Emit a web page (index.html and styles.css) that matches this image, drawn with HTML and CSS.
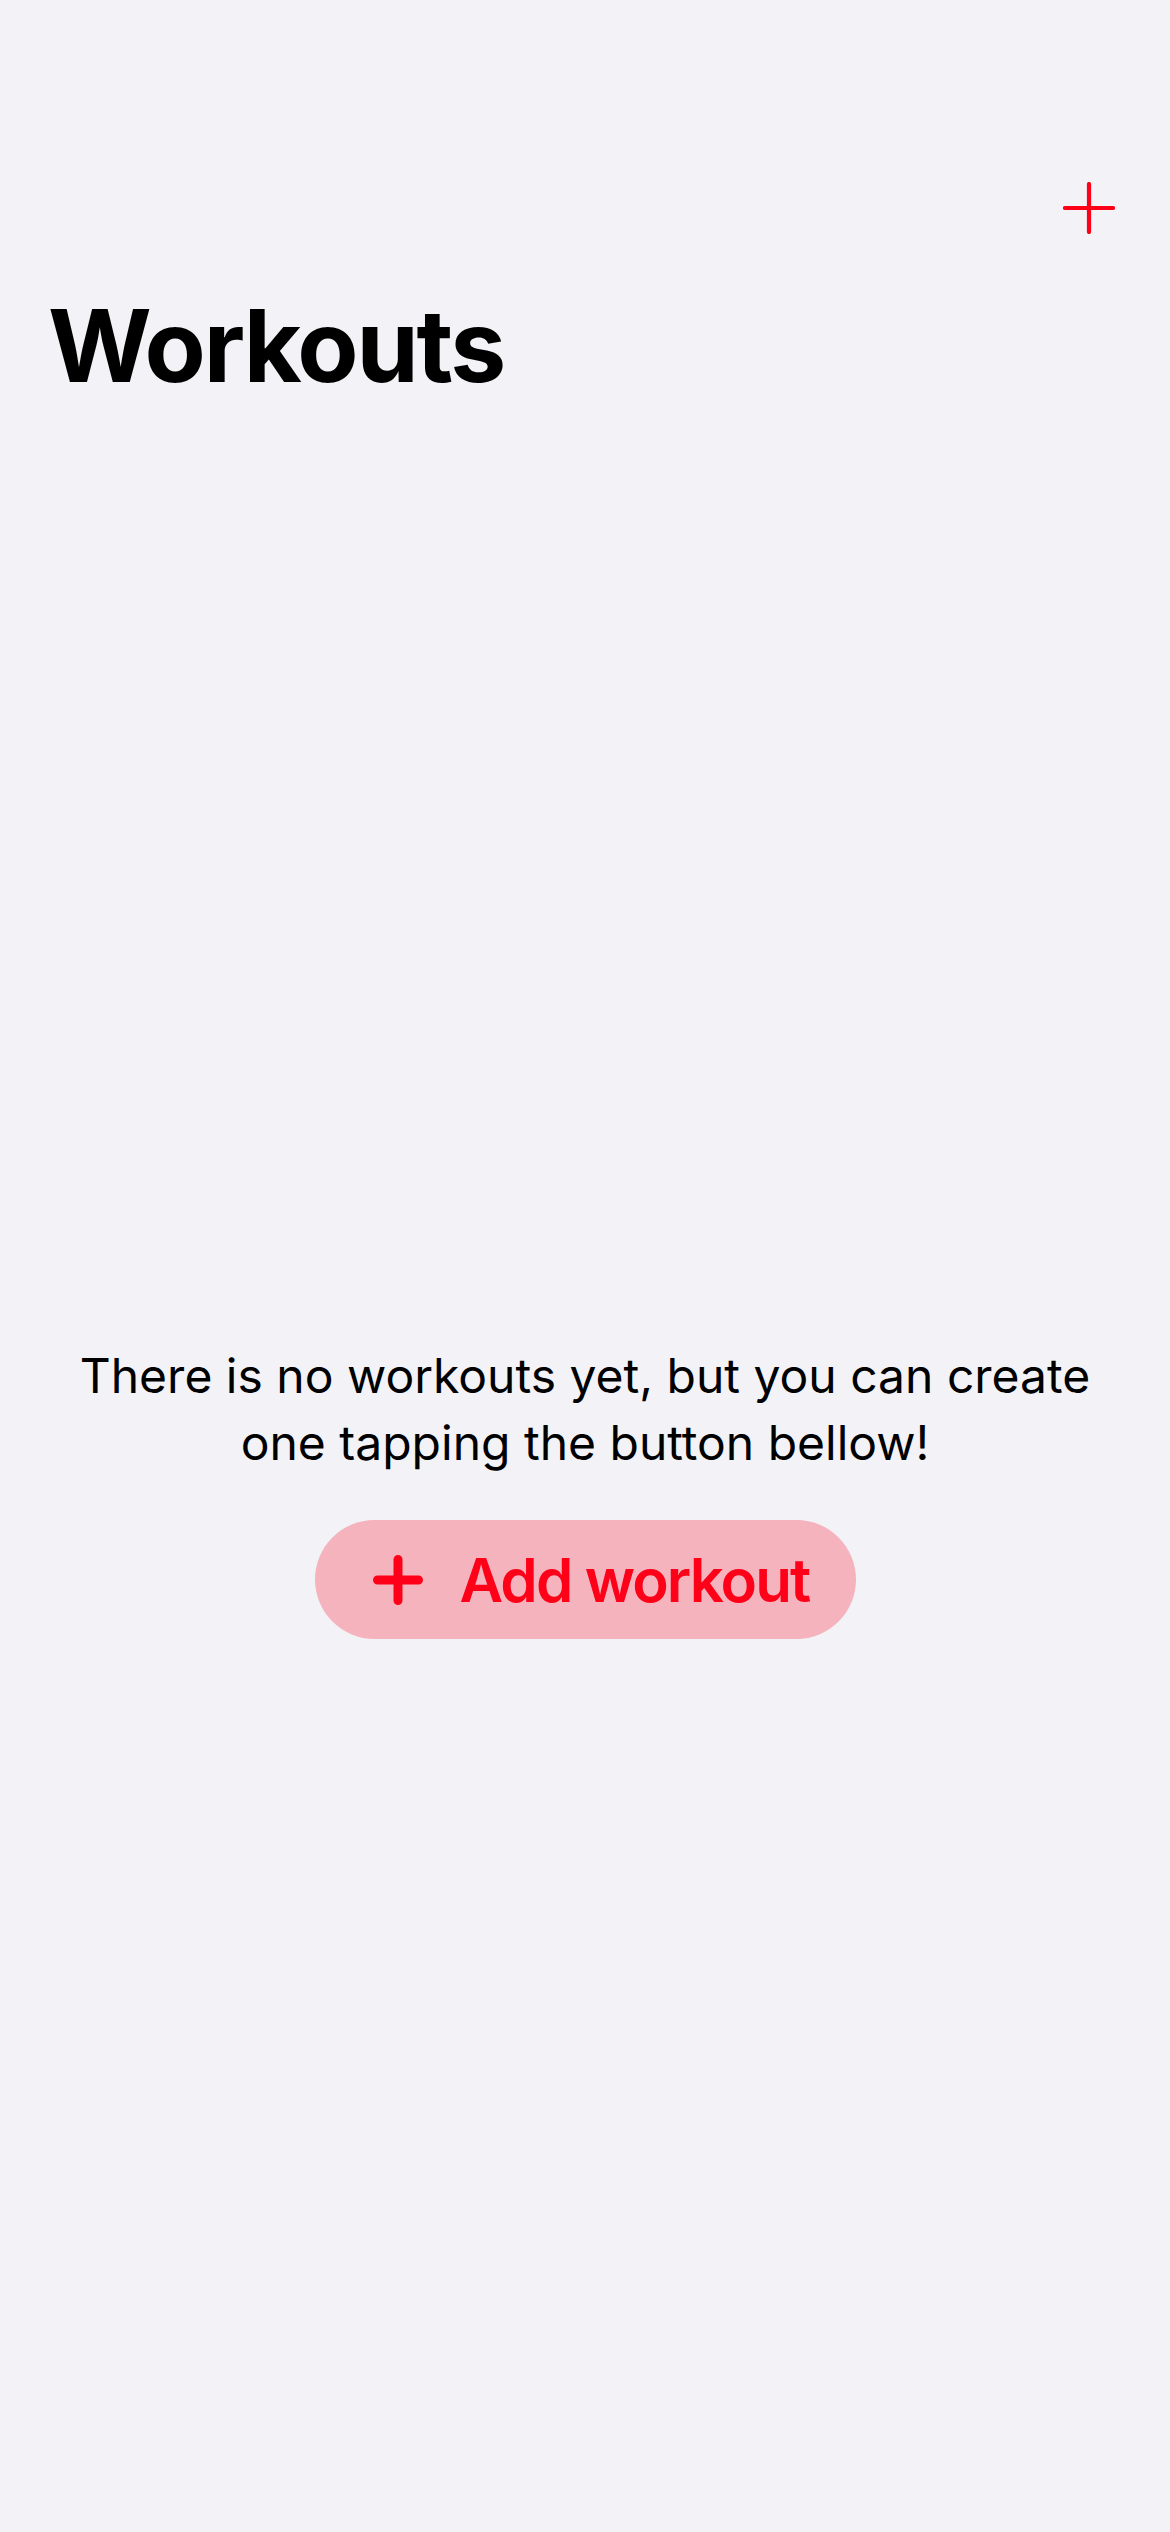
FILE: index.html
```html
<!DOCTYPE html>
<html>
<head>
<meta charset="utf-8">
<link rel="stylesheet" href="styles.css">
</head>
<body>
<div class="screen">
  <header class="navbar">
    <div class="nav-actions">
      <button class="icon-btn" aria-label="Add">
        <svg width="52" height="52" viewBox="0 0 52 52"><path d="M26 2v48M2 26h48" stroke="#FF0019" stroke-width="4.2" stroke-linecap="round" fill="none"/></svg>
      </button>
    </div>
    <h1 class="title">Workouts</h1>
  </header>
  <main class="empty">
    <p class="empty-text">There is no workouts yet, but you can create one tapping the button bellow!</p>
    <button class="add-btn">
      <svg width="50" height="50" viewBox="0 0 50 50"><path d="M25 4.5v41M4.5 25h41" stroke="#FF0019" stroke-width="9" stroke-linecap="round" fill="none"/></svg>
      <span>Add workout</span>
    </button>
  </main>
</div>
</body>
</html>
```
FILE: styles.css
```css
html, body {
  margin: 0;
  padding: 0;
  background: #F2F2F7;
}
.screen {
  width: 1170px;
  height: 2532px;
  font-family: Inter, "Noto Sans", sans-serif;
  color: #000;
  display: flex;
  flex-direction: column;
}
.navbar {
  padding: 182px 55px 0 48px;
}
.nav-actions {
  display: flex;
  justify-content: flex-end;
  height: 52px;
}
.icon-btn {
  border: 0;
  padding: 0;
  background: none;
  width: 52px;
  height: 52px;
  display: block;
}
.title {
  margin: 52px 0 0 0;
  font-size: 100px;
  line-height: 120px;
  font-weight: 700;
  letter-spacing: -2.2px;
}
.empty {
  display: flex;
  flex-direction: column;
  align-items: center;
  padding-top: 936px;
}
.empty-text {
  margin: 0;
  width: 1040px;
  text-align: center;
  font-size: 48px;
  line-height: 67px;
  font-weight: 400;
}
.add-btn {
  margin-top: 44px;
  height: 119px;
  width: 541px;
  border: 0;
  border-radius: 60px;
  background: #F5B3BD;
  color: #FF0019;
  font-family: Inter, "Noto Sans", sans-serif;
  font-size: 60px;
  font-weight: 600;
  letter-spacing: -1.9px;
  display: flex;
  align-items: center;
  padding: 0 0 0 58px;
  gap: 37px;
  box-sizing: border-box;
}
.add-btn svg { flex: none; }
```
